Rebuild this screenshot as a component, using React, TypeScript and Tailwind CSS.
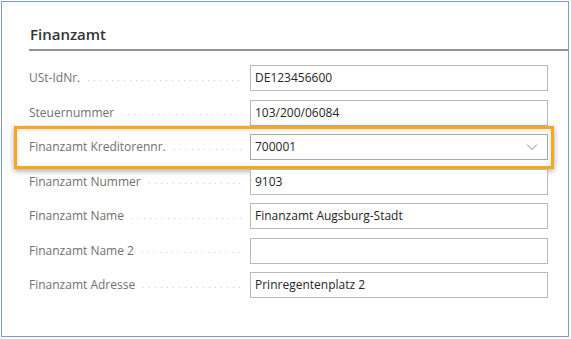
import React from "react";

const rows: { label: string; value: string; lookup?: boolean; highlight?: boolean }[] = [
  { label: "USt-IdNr.", value: "DE123456600" },
  { label: "Steuernummer", value: "103/200/06084" },
  { label: "Finanzamt Kreditorennr.", value: "700001", lookup: true, highlight: true },
  { label: "Finanzamt Nummer", value: "9103" },
  { label: "Finanzamt Name", value: "Finanzamt Augsburg-Stadt" },
  { label: "Finanzamt Name 2", value: "" },
  { label: "Finanzamt Adresse", value: "Prinregentenplatz 2" },
];

export default function App() {
  return (
    <div
      className="w-[571px] h-[339px] bg-white overflow-hidden"
      style={{ fontFamily: '"Open Sans", "Noto Sans", sans-serif' }}
    >
      <div className="ml-[1px] mt-[1px] w-[568px] h-[336px] border border-[#7f9cc4] bg-white">
        <div className="pl-[27px] pt-[22px]">
          <div className="text-[15px] leading-[20px] font-semibold text-[#333333] pl-[1px]">Finanzamt</div>
          <div className="mt-[5px] h-[2px] bg-[#8d949c]" />
          <div className="mt-[14px] flex flex-col gap-[8.5px]">
            {rows.map((r) => (
              <div key={r.label} className="relative flex items-center h-[26px]">
                {r.highlight && (
                  <div className="absolute left-[-15px] right-[14px] top-[-8px] bottom-[-9px] border-[3px] border-[#f6a81c] shadow-[0_2px_6px_rgba(0,0,0,0.35),inset_0_1px_4px_rgba(0,0,0,0.15)] pointer-events-none" />
                )}
                <div className="relative w-[221px] flex items-center">
                  <span className="text-[12px] text-[#707070] whitespace-nowrap pr-[8px]">{r.label}</span>
                  <span className="flex-1 h-[1px] mt-[4px] bg-[linear-gradient(to_right,#cccccc_1px,transparent_1px)] bg-[length:6px_1px] bg-repeat-x mr-[6px]" />
                </div>
                <div
                  className={`relative w-[298px] h-[26px] border ${r.lookup ? "border-[#a8a8a8]" : "border-[#b9b9b9]"} bg-white flex items-center pl-[4px] pr-[8px]`}
                >
                  <span className="flex-1 text-[12px] text-[#262626] whitespace-nowrap">{r.value}</span>
                  {r.lookup && (
                    <svg width="12" height="8" viewBox="0 0 12 8" className="mr-[1px]">
                      <path d="M1 1.5 L6 6.5 L11 1.5" fill="none" stroke="#8a8a8a" strokeWidth="1" />
                    </svg>
                  )}
                </div>
              </div>
            ))}
          </div>
        </div>
      </div>
    </div>
  );
}
